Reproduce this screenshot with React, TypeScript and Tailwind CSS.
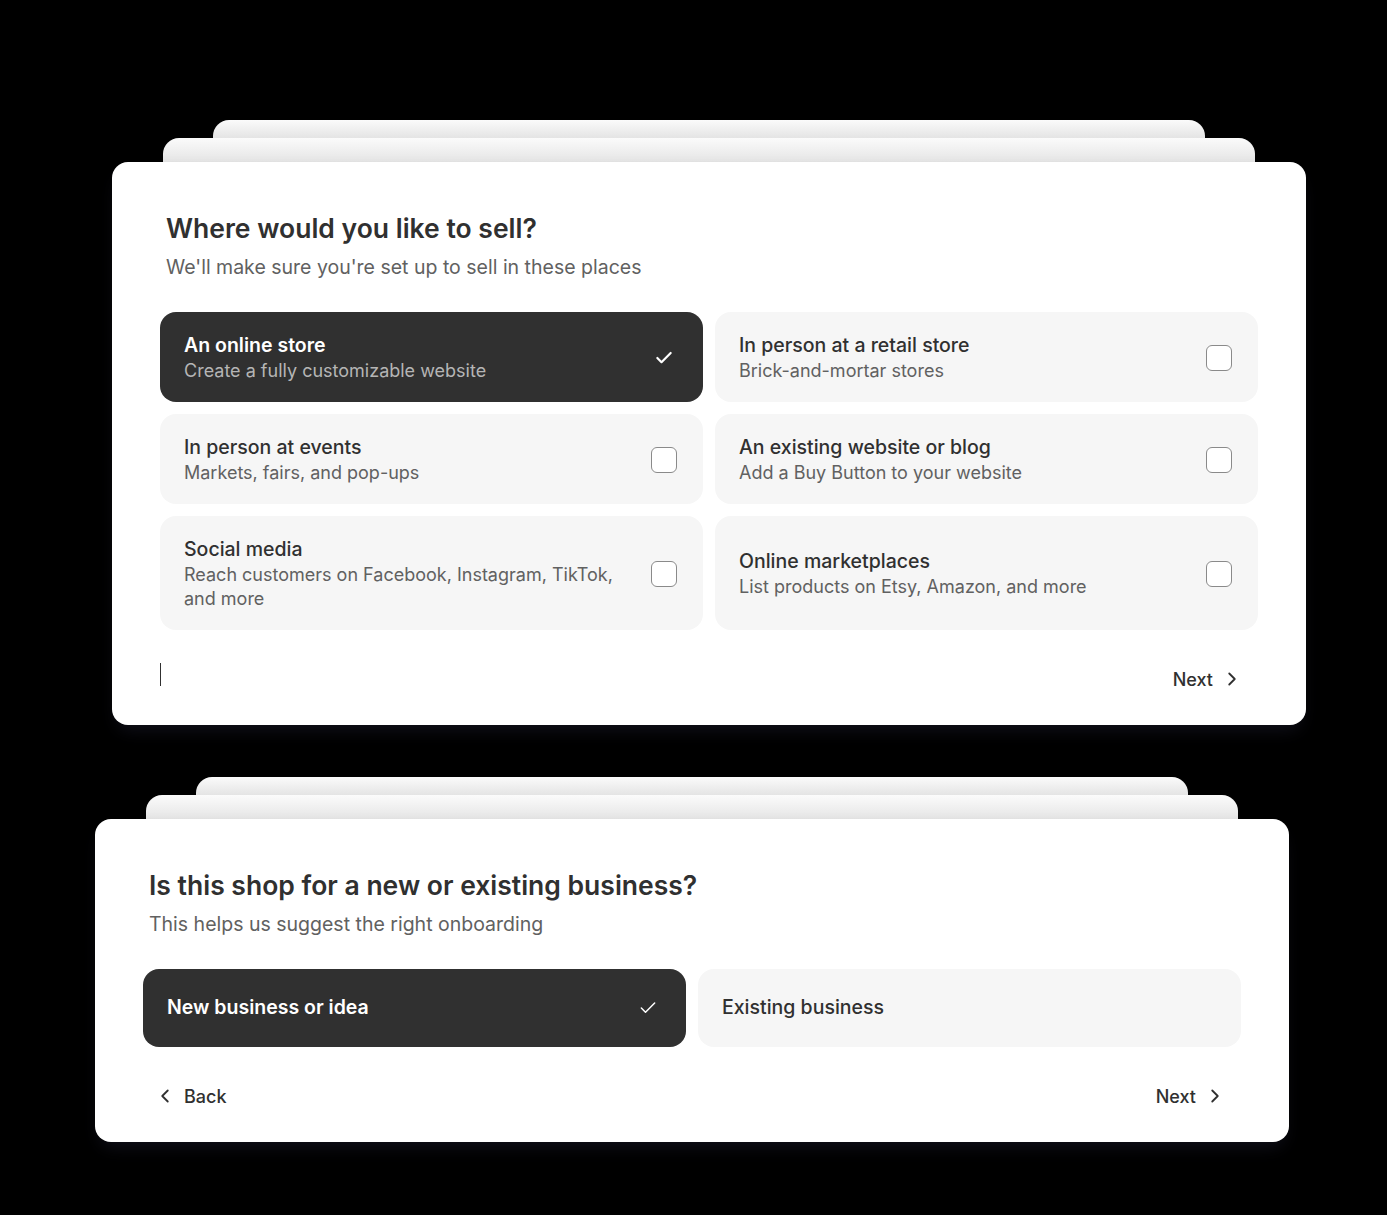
import React, { useState } from 'react';
import { Check, ChevronLeft, ChevronRight } from 'lucide-react';

type Place = {
    id: string;
    title: string;
    description: string;
};

const places: Place[] = [
    { id: 'online', title: 'An online store', description: 'Create a fully customizable website' },
    { id: 'retail', title: 'In person at a retail store', description: 'Brick-and-mortar stores' },
    { id: 'events', title: 'In person at events', description: 'Markets, fairs, and pop-ups' },
    { id: 'blog', title: 'An existing website or blog', description: 'Add a Buy Button to your website' },
    { id: 'social', title: 'Social media', description: 'Reach customers on Facebook, Instagram, TikTok, and more' },
    { id: 'marketplaces', title: 'Online marketplaces', description: 'List products on Etsy, Amazon, and more' },
];

function StackedCard({ children }: { children: React.ReactNode }) {
    return (
        <div className="flex flex-col">
            <div className="mx-[101px] h-[18px] rounded-t-[16px] bg-linear-to-b from-[#fbfbfb] to-[#e4e4e4]" />
            <div className="mx-[51px] h-[24px] rounded-t-[16px] bg-linear-to-b from-[#fbfbfb] to-[#e5e5e5]" />
            <div className="rounded-[16px] bg-white px-12 pb-[29px] shadow-[0_10px_18px_-6px_rgba(30,30,48,0.6)]">
                {children}
            </div>
        </div>
    );
}

function Checkbox({ checked, thin }: { checked: boolean; thin?: boolean }) {
    if (checked) {
        return (
            <span className="flex h-[26px] w-[26px] shrink-0 items-center justify-center text-white">
                <Check size={20} strokeWidth={thin ? 1.8 : 2.6} />
            </span>
        );
    }
    return <span className="h-[26px] w-[26px] shrink-0 rounded-[6px] border-[1.5px] border-[#8a8a8a] bg-white" />;
}

function NavButton({ label, dir }: { label: string; dir: 'back' | 'next' }) {
    return (
        <button
            className={`flex h-[34px] items-center gap-2 text-[18px] font-medium text-[#303030] ${
                dir === 'back' ? 'pl-[11px] pr-3' : 'pl-3 pr-[15px]'
            }`}
        >
            {dir === 'back' && <ChevronLeft size={22} strokeWidth={2} />}
            {label}
            {dir === 'next' && <ChevronRight size={22} strokeWidth={2} />}
        </button>
    );
}

export default function App() {
    const [selected, setSelected] = useState<string[]>(['online']);
    const [business, setBusiness] = useState<'new' | 'existing'>('new');

    const togglePlace = (id: string) => {
        setSelected(prev => (prev.includes(id) ? prev.filter(p => p !== id) : [...prev, id]));
    };

    return (
        <main
            className="min-h-screen bg-black pt-[120px] pb-[73px]"
            style={{ fontFamily: 'Inter, "Noto Sans", sans-serif' }}
        >
            <div className="ml-[112px] w-[1194px]">
                <StackedCard>
                    <h1 className="pt-[50px] pl-[6px] text-[26.5px] leading-[32px] font-semibold text-[#303030]">
                        Where would you like to sell?
                    </h1>
                    <p className="mt-[10px] pl-[6px] text-[19.5px] leading-[26px] text-[#616161]">
                        We'll make sure you're set up to sell in these places
                    </p>

                    <div className="mt-8 grid grid-cols-2 gap-3">
                        {places.map(place => {
                            const isOn = selected.includes(place.id);
                            return (
                                <button
                                    key={place.id}
                                    onClick={() => togglePlace(place.id)}
                                    className={`flex min-h-[90px] items-center gap-6 rounded-[16px] pt-5 pb-[19px] pl-6 pr-[26px] text-left ${
                                        isOn ? 'bg-[#303030]' : 'bg-[#f6f6f6]'
                                    }`}
                                >
                                    <div className="flex-1">
                                        <div
                                            className={`text-[19.5px] leading-[26px] ${
                                                isOn ? 'font-semibold text-white' : 'font-medium text-[#303030]'
                                            }`}
                                        >
                                            {place.title}
                                        </div>
                                        <div
                                            className={`mt-px text-[18px] leading-[24px] ${
                                                isOn ? 'text-[#b5b5b5]' : 'text-[#616161]'
                                            }`}
                                        >
                                            {place.description}
                                        </div>
                                    </div>
                                    <Checkbox checked={isOn} />
                                </button>
                            );
                        })}
                    </div>

                    <div className="mt-8 flex items-center justify-between">
                        <div className="mt-px h-[23px] w-px self-start bg-[#303030]" />
                        <NavButton label="Next" dir="next" />
                    </div>
                </StackedCard>
            </div>

            <div className="mt-[52px] ml-[95px] w-[1194px]">
                <StackedCard>
                    <h1 className="pt-[50px] pl-[6px] text-[26.5px] leading-[32px] font-semibold text-[#303030]">
                        Is this shop for a new or existing business?
                    </h1>
                    <p className="mt-[10px] pl-[6px] text-[19.5px] leading-[26px] text-[#616161]">
                        This helps us suggest the right onboarding
                    </p>

                    <div className="mt-8 grid grid-cols-2 gap-3">
                        <button
                            onClick={() => setBusiness('new')}
                            className={`flex h-[78px] items-center justify-between rounded-[16px] pl-6 pr-[25px] text-left ${
                                business === 'new' ? 'bg-[#303030]' : 'bg-[#f6f6f6]'
                            }`}
                        >
                            <span
                                className={`text-[19.5px] ${
                                    business === 'new' ? 'font-semibold text-white' : 'font-medium text-[#303030]'
                                }`}
                            >
                                New business or idea
                            </span>
                            {business === 'new' && <Checkbox checked thin />}
                        </button>
                        <button
                            onClick={() => setBusiness('existing')}
                            className={`flex h-[78px] items-center justify-between rounded-[16px] pl-6 pr-[25px] text-left ${
                                business === 'existing' ? 'bg-[#303030]' : 'bg-[#f6f6f6]'
                            }`}
                        >
                            <span
                                className={`text-[19.5px] ${
                                    business === 'existing' ? 'font-semibold text-white' : 'font-medium text-[#303030]'
                                }`}
                            >
                                Existing business
                            </span>
                            {business === 'existing' && <Checkbox checked thin />}
                        </button>
                    </div>

                    <div className="mt-8 flex items-center justify-between">
                        <NavButton label="Back" dir="back" />
                        <NavButton label="Next" dir="next" />
                    </div>
                </StackedCard>
            </div>
        </main>
    );
}
